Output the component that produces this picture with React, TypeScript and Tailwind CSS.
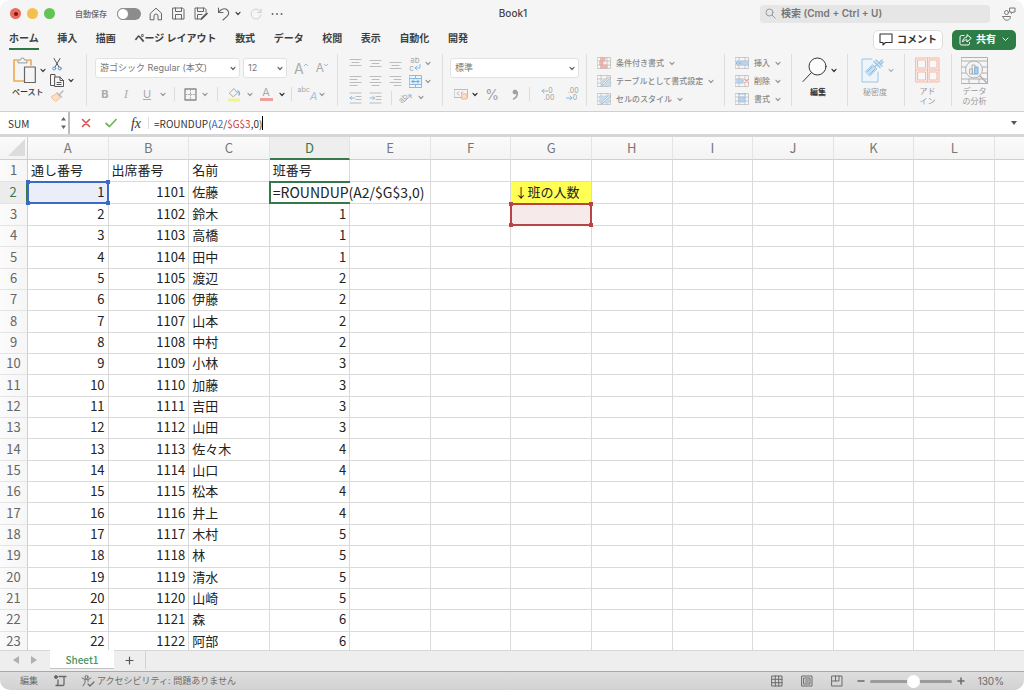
import type { ReactNode } from "react";
import clsx from "clsx";

const TABS = ["ホーム", "挿入", "描画", "ページ レイアウト", "数式", "データ", "校閲", "表示", "自動化", "開発"];
const COLUMNS = ["A", "B", "C", "D", "E", "F", "G", "H", "I", "J", "K", "L"];
const NAMES = [
  "佐藤", "鈴木", "高橋", "田中", "渡辺", "伊藤", "山本", "中村", "小林", "加藤", "吉田",
  "山田", "佐々木", "山口", "松本", "井上", "木村", "林", "清水", "山崎", "森", "阿部",
];

const ROWS: string[][] = [
  ["通し番号", "出席番号", "名前", "班番号"],
  ...NAMES.map((name, i) => [String(i + 1), String(1101 + i), name, i === 0 ? "" : String(Math.ceil((i + 1) / 4))]),
];

type IconProps = { w: number; h: number; className?: string; children: ReactNode };

function Icon({ w, h, className, children }: IconProps) {
  return (
    <svg width={w} height={h} viewBox={`0 0 ${w} ${h}`} fill="none" stroke="currentColor" strokeLinecap="round" strokeLinejoin="round" className={clsx("shrink-0", className)} aria-hidden="true">
      {children}
    </svg>
  );
}

function Chevron({ className = "text-[#9a9a9a]" }: { className?: string }) {
  return (
    <Icon w={6} h={5} className={className}>
      <path d="M1 1.3 3 3.5 5 1.3" strokeWidth="1.2" />
    </Icon>
  );
}

function Tool({ label, className, children }: { label: string; className?: string; children: ReactNode }) {
  return (
    <button type="button" aria-label={label} className={clsx("flex items-center justify-center shrink-0", className)}>
      {children}
    </button>
  );
}

function Divider() {
  return <span className="w-px h-[14px] bg-[#dcdcdc] shrink-0" />;
}

function Group({ className, children }: { className?: string; children: ReactNode }) {
  return <div className={clsx("h-[52px] border-r border-[#dedede] shrink-0", className)}>{children}</div>;
}

function Picker({ label, value, className }: { label: string; value: string; className: string }) {
  return (
    <div className={clsx("relative h-5", className)}>
      <select aria-label={label} className="block appearance-none w-full h-full rounded-[3px] border border-[#e2e2e2] bg-white pl-1 pr-4 text-[9px] text-[#777]">
        <option>{value}</option>
      </select>
      <Chevron className="absolute right-1 top-2 text-[#666]" />
    </div>
  );
}

function Lines({ rows }: { rows: [number, number, number][] }) {
  return (
    <Icon w={13} h={12} className="text-[#bcbcbc]">
      {rows.map(([y, a, b]) => <path key={y} d={`M${a} ${y}.5H${b}`} strokeWidth="1" />)}
    </Icon>
  );
}

function GridIcon({ kind }: { kind: string }) {
  return (
    <Icon w={14} h={12} className="text-[#a9a9a9] opacity-80">
      <path d="M.5.5h13v11H.5zM.5 4h13M.5 8h13M4 .5v11M10 .5v11" strokeWidth=".7" />
      {kind === "cond" && <path d="M4 1h4v3H4zM4 8h6v3H4zM3 4h3v4H3z" fill="#f0a7a0" stroke="#e58e86" strokeWidth=".6" />}
      {kind === "table" && <path d="M4 4h9v7H4z" fill="#bcd8ef" stroke="none" />}
      {kind === "style" && <path d="M3 3h9v7H3z" fill="#bcd8ef" stroke="#9fc4e4" strokeWidth=".6" />}
      {(kind === "table" || kind === "style") && <path d="m13 3-6 6-2 2 .5-2.5L12 2z" fill="#f7f7f7" stroke="#8ea3b5" strokeWidth=".7" />}
      {kind === "insert" && <><path d="M5 4h8.500v4H5z" fill="#a9cdec" stroke="#8dbbe2" strokeWidth=".6" /><path d="M6 6H1.200M3 4 1 6l2 2" stroke="#6aa7dc" strokeWidth="1" /></>}
      {kind === "delete" && <><path d="M9 3h4.500v6H9z" fill="#f5f5f5" stroke="none" /><path d="M2 4h5l2 2-2 2H2z" fill="#a9cdec" stroke="#8dbbe2" strokeWidth=".6" /><path d="m9.500 4 4 4m0-4-4 4" stroke="#ea8c85" strokeWidth="1.100" /></>}
      {kind === "format" && <><path d="M4 4h6v5H4z" fill="#a9cdec" stroke="#7fb2df" strokeWidth=".7" /><path d="M4 1h6M4 0v2M10 0v2" stroke="#7fb2df" strokeWidth=".9" /></>}
    </Icon>
  );
}

function MenuItem({ kind, label }: { kind: string; label: string }) {
  return (
    <button type="button" className="flex items-center gap-[5px] h-[18px] text-[8px] font-medium whitespace-nowrap text-[#888]">
      <GridIcon kind={kind} />
      <span>{label}</span>
      <Chevron />
    </button>
  );
}

function TitleBar() {
  return (
    <header className="grid grid-cols-[1fr_auto_1fr] items-center h-[27px] shrink-0 pl-[10px] pr-2 text-[#666]">
      <div className="flex items-center">
        <div className="flex gap-[6px]">
          <span className="flex items-center justify-center size-[11px] rounded-full bg-[#ec6a5e]"><span className="size-1 rounded-full bg-[#7d1712]" /></span>
          <span className="size-[11px] rounded-full bg-[#f4bf4f]" />
          <span className="size-[11px] rounded-full bg-[#61c554]" />
        </div>
        <label className="flex items-center gap-[10px] ml-5 text-[8px] font-medium whitespace-nowrap">
          自動保存
          <input type="checkbox" className="appearance-none w-6 h-3 rounded-full bg-[#8c8c8c] before:block before:size-3 before:rounded-full before:bg-white before:border before:border-[#8c8c8c]" />
        </label>
        <div className="flex items-center gap-[9px] ml-2">
          <Tool label="ホーム画面">
            <Icon w={14} h={14}><path d="M1.5 6.2 7 1.2l5.500 5v6.600H9V9a2 2 0 0 0-4 0v3.800H1.500z" /></Icon>
          </Tool>
          <Tool label="保存">
            <Icon w={13} h={13}><path d="M1 1h9.500L12 2.500V12H1zM3.500 1v3.500h6V1M3.500 12V7.500h6V12" /></Icon>
          </Tool>
          <Tool label="名前を付けて保存">
            <Icon w={14} h={13}><path d="M6 12H1V1h9.500L12 2.500V5M3.500 1v3.500h6V1M3.500 12V7.500H8" /><path d="m12.500 6-5 5-.8 1.500 1.600-.6 5-5z" fill="#555" stroke="#555" /></Icon>
          </Tool>
          <Tool label="元に戻す">
            <Icon w={13} h={14}><path d="M1.500 1v4.500H6M1.500 5.500C4 1.500 8 .8 10.300 3c2 2 1.800 4.300-.3 6.300L6 13" strokeWidth="1.100" /></Icon>
          </Tool>
          <Tool label="元に戻す一覧" className="-ml-1"><Chevron className="text-[#444]" /></Tool>
          <Tool label="やり直し">
            <Icon w={12} h={12} className="text-[#cfcfcf]"><path d="M11 1v3.500H7.500M10.800 4.400A5 5 0 1 0 11 7" /></Icon>
          </Tool>
          <Tool label="その他">
            <Icon w={12} h={4}><path d="M1.500 2h.1M6 2h.1M10.500 2h.1" strokeWidth="1.800" /></Icon>
          </Tool>
        </div>
      </div>
      <h1 className="text-[10px] font-medium text-[#444]">Book1</h1>
      <div className="flex items-center justify-end gap-3">
        <label className="flex items-center gap-[5px] w-[230px] h-[18px] rounded bg-[#e6e6e6] px-[5px]">
          <Icon w={11} h={11} className="text-[#999]"><circle cx="4.500" cy="4.500" r="3.500" /><path d="m7.200 7.200 3 3" /></Icon>
          <input aria-label="検索" placeholder="検索 (Cmd + Ctrl + U)" className="grow min-w-0 bg-transparent text-[10px] font-semibold outline-none placeholder:text-[#777]" />
        </label>
        <Tool label="共同作業">
          <Icon w={14} h={14} className="text-[#777]"><circle cx="4.500" cy="5.500" r="2" /><path d="M1 9.500h7.500c0 5-7.500 5-7.500 0zM8 1h5v4h-2L9.300 6.500V5H8z" /></Icon>
        </Tool>
      </div>
    </header>
  );
}

function RibbonTabs() {
  return (
    <nav className="flex items-center justify-between h-[25px] shrink-0 pl-[9px] pr-2">
      <div className="flex justify-between w-[459px] text-[10px] font-bold text-[#3f3f3f] whitespace-nowrap">
        {TABS.map((tab, i) => (
          <a key={tab} href="#ribbon" className={clsx("flex items-center h-[21px] border-b-2", i === 0 ? "border-[#2f7547]" : "border-transparent")}>{tab}</a>
        ))}
      </div>
      <div className="flex gap-[9px] text-[10px] font-bold whitespace-nowrap">
        <button type="button" className="flex items-center gap-1 h-5 px-[5px] rounded-[5px] border border-[#dedede] bg-white text-[#333]">
          <Icon w={14} h={13}><path d="M1 1h12v8.500H6.500L4 12V9.500H1z" strokeWidth="1.100" /></Icon>
          コメント
        </button>
        <button type="button" className="flex items-center gap-1 h-5 px-[7px] rounded-[5px] bg-[#2f7d46] text-white">
          <Icon w={13} h={12}><path d="M5 1.500H2.500A1.500 1.500 0 0 0 1 3v6.500A1.500 1.500 0 0 0 2.500 11H9a1.500 1.500 0 0 0 1.500-1.500V8.500" /><path d="M8 1v2C5.500 3.200 4 5 3.500 8 5 6.300 6 5.800 8 5.800V8l4-3.500z" /></Icon>
          共有
          <Icon w={7} h={5} className="ml-[2px]"><path d="m1 1 2.500 2.500L6 1" /></Icon>
        </button>
      </div>
    </nav>
  );
}

function Ribbon() {
  return (
    <section id="ribbon" className="flex items-start h-[60px] shrink-0 pt-[2px] border-b border-[#d0d0d0]">
      <Group className="flex w-[87px] pl-3 gap-1 text-[#555]">
        <button type="button" className="flex flex-col items-start text-[8px] leading-3 font-medium text-[#333]">
          <span className="flex items-center gap-1 h-8">
            <Icon w={24} h={28}>
              <path d="M5 4H2v21h10M16 4h3v5" stroke="#f0a850" strokeWidth="1.600" />
              <path d="M6 6.500V4h2.500a2 2 0 0 1 4 0H15v2.500z" fill="#f5f5f5" stroke="#999" />
              <path d="M12.500 11h10.800v15.500H12.500z" fill="#f5f5f5" stroke="#666" strokeWidth="1.200" />
            </Icon>
            <Chevron className="text-[#444]" />
          </span>
          ペースト
        </button>
        <div className="flex flex-col justify-between items-start py-1 h-[52px]">
          <Tool label="切り取り" className="ml-[2px]">
            <Icon w={10} h={13}><path d="M2 .5 7 9M8 .5 3 9" stroke="#555" /><circle cx="2.200" cy="10.500" r="1.500" stroke="#4c94d0" /><circle cx="7.800" cy="10.500" r="1.500" stroke="#4c94d0" /></Icon>
          </Tool>
          <Tool label="コピー" className="gap-1">
            <Icon w={14} h={13}><path d="M5 2.500V.5H.5v11H4M5 3h5l3.500 3.500v6H5zM10 3v3.500h3.500M7 8.500h4M7 10.500h4" /></Icon>
            <Chevron className="text-[#444]" />
          </Tool>
          <Tool label="書式のコピー">
            <Icon w={14} h={12}><path d="m13 1-4 4M7 3l4.500 4" stroke="#bbb" strokeWidth="1.600" /><path d="M6 4 1 7l4.500 4.500L10 8z" fill="#fbe0c4" stroke="#f2bf90" /></Icon>
          </Tool>
        </div>
      </Group>

      <Group className="flex flex-col justify-between w-[251px] pl-2 pr-1 pt-1 pb-[2px] text-[#aaa]">
        <div className="flex items-center gap-[3px] h-5">
          <Picker label="フォント" value="游ゴシック Regular (本文)" className="w-[145px]" />
          <Picker label="フォント サイズ" value="12" className="w-11" />
          <Tool label="フォントの拡大" className="ml-1 text-[14px]">A<Icon w={4} h={11}><path d="m0 3 2-2 2 2" stroke="#92bfe4" /></Icon></Tool>
          <Tool label="フォントの縮小" className="ml-[5px] text-[12px]">A<Icon w={4} h={11}><path d="m0 1 2 2 2-2" stroke="#92bfe4" /></Icon></Tool>
        </div>
        <div className="flex items-center h-5">
          <Tool label="太字" className="w-5 text-[11px] font-bold">B</Tool>
          <Tool label="斜体" className="w-[22px] text-[12px] italic font-['Liberation_Serif',serif]">I</Tool>
          <Tool label="下線" className="w-5 text-[11px] underline">U</Tool>
          <Tool label="下線の種類" className="w-3"><Chevron /></Tool>
          <span className="w-[5px]" /><Divider />
          <Tool label="罫線" className="w-[30px]"><Icon w={13} h={13}><path d="M1 1h11v11H1z" stroke="#888" strokeWidth="1.300" /><path d="M6.500 2v9M2 6.500h9" strokeDasharray="1 1.500" /></Icon></Tool>
          <Tool label="罫線の種類" className="-ml-[3px]"><Chevron /></Tool>
          <span className="w-[9px]" /><Divider />
          <Tool label="塗りつぶし" className="w-8"><Icon w={14} h={15}><path d="M2.500 6 7 1.500 10.500 6 6.500 9.500z" /><path d="M11 4c1.500 1 1.500 3 1 4" stroke="#7fb2df" strokeWidth="1.500" /><path d="M1 13h12" stroke="#f4f28f" strokeWidth="3" strokeLinecap="butt" /></Icon></Tool>
          <Tool label="塗りつぶしの色" className="-ml-[3px]"><Chevron /></Tool>
          <Tool label="フォントの色" className="w-[26px] flex-col text-[11px] leading-[10px]">A<span className="w-[13px] h-[3px] mt-px bg-[#efa09a]" /></Tool>
          <Tool label="文字色の一覧"><Chevron className="text-[#333]" /></Tool>
          <span className="w-[6px]" /><Divider />
          <Tool label="ふりがな" className="w-[27px] text-[7px] pl-1"><span className="-mt-2">abc</span><span className="mt-1 text-[11px] italic text-[#9cc5e8]">A</span></Tool>
          <Tool label="ふりがなの設定"><Chevron /></Tool>
        </div>
      </Group>

      <Group className="grid grid-cols-[20px_20px_20px_20px_auto] items-center w-[105px] pl-[7px] pr-2">
        <Tool label="上揃え"><Lines rows={[[1, 1, 12], [4, 3, 10], [7, 1, 12]]} /></Tool>
        <Tool label="上下中央揃え"><Lines rows={[[2, 1, 12], [5, 3, 10], [8, 1, 12]]} /></Tool>
        <Tool label="下揃え"><Lines rows={[[4, 1, 12], [7, 3, 10], [10, 1, 12]]} /></Tool>
        <Tool label="折り返し" className="flex-col text-[8px] leading-[8px] text-[#aaa]"><span>ab</span><span className="flex">c<Icon w={7} h={7}><path d="M6 0v4H1m2-2L1 4l2 2" stroke="#87b9e2" /></Icon></span></Tool>
        <Chevron />
        <Tool label="左揃え"><Lines rows={[[1, 1, 12], [4, 1, 8], [7, 1, 12], [10, 1, 8]]} /></Tool>
        <Tool label="中央揃え"><Lines rows={[[1, 1, 12], [4, 3, 10], [7, 1, 12], [10, 3, 10]]} /></Tool>
        <Tool label="右揃え"><Lines rows={[[1, 1, 12], [4, 5, 12], [7, 1, 12], [10, 5, 12]]} /></Tool>
        <Tool label="セルの結合"><Icon w={13} h={13} className="text-[#b0b0b0]"><path d="M.5.5h12v12H.5zM6.500.500v3M6.500 10v2.500" /><path d="M.5 3.500h12v6H.5z" fill="#e1effa" stroke="#87b9e2" /><path d="M3 6.500h7M4.500 5 3 6.500 4.500 8M8.500 5 10 6.500 8.500 8" stroke="#6aa7dc" /></Icon></Tool>
        <Chevron />
        <Tool label="インデントを減らす"><Icon w={13} h={12} className="text-[#bcbcbc]"><path d="M1 1h11M7 4.500h5M7 7.500h5M1 11h11" /><path d="M5.500 6H1m1.500-1.500L1 6l1.500 1.500" stroke="#87b9e2" /></Icon></Tool>
        <Tool label="インデントを増やす"><Icon w={13} h={12} className="text-[#bcbcbc]"><path d="M1 1h11M7 4.500h5M7 7.500h5M1 11h11" /><path d="M1 6h4.500M4 4.500 5.500 6 4 7.500" stroke="#87b9e2" /></Icon></Tool>
        <div className="col-span-3 flex items-center gap-[6px] pl-[6px]">
          <Divider />
          <Tool label="文字の向き" className="text-[8px] text-[#aaa]"><span className="-rotate-45">ab</span><Icon w={9} h={10} className="-ml-1"><path d="m1 9 7-7M5 2h3v3" stroke="#87b9e2" /></Icon></Tool>
          <Chevron />
        </div>
      </Group>

      <Group className="flex flex-col justify-between w-36 px-[7px] pt-1 pb-[2px] text-[#a0a0a0]">
        <Picker label="表示形式" value="標準" className="w-full" />
        <div className="flex items-center h-5">
          <Tool label="通貨" className="w-[22px]"><Icon w={14} h={12}><path d="M.5 1.500h13v8H.500zM5 4c-2-1-3 3 0 3M9 4c-2-1-3 3 0 3" stroke="#bbb" /><path d="M8 6h5v5H8z" fill="#fbdcc8" stroke="#f0b898" /></Icon></Tool>
          <Tool label="通貨の種類"><Chevron className="text-[#333]" /></Tool>
          <Tool label="パーセント" className="w-[28px] text-[14px]">%</Tool>
          <Tool label="桁区切り" className="w-[18px]"><Icon w={8} h={11}><circle cx="4" cy="3" r="2" fill="currentColor" /><path d="M6.300 3.500C6.500 7 5 9 2.500 10" strokeWidth="1.500" /></Icon></Tool>
          <span className="w-[5px]" /><Divider />
          <Tool label="小数点以下を増やす" className="flex-col w-[34px] text-[7px] leading-[7px]"><span className="flex items-center"><Icon w={7} h={6}><path d="M7 3H1m2-2L1 3l2 2" stroke="#87b9e2" /></Icon>0</span><span className="pl-1">.00</span></Tool>
          <Tool label="小数点以下を減らす" className="flex-col text-[7px] leading-[7px]"><span className="pl-1">.00</span><span className="flex items-center"><Icon w={7} h={6}><path d="M0 3h6M4 1l2 2-2 2" stroke="#87b9e2" /></Icon>0</span></Tool>
        </div>
      </Group>

      <Group className="w-[138px] pl-[10px]">
        <MenuItem kind="cond" label="条件付き書式" />
        <MenuItem kind="table" label="テーブルとして書式設定" />
        <MenuItem kind="style" label="セルのスタイル" />
      </Group>

      <Group className="w-[67px] pl-[10px]">
        <MenuItem kind="insert" label="挿入" />
        <MenuItem kind="delete" label="削除" />
        <MenuItem kind="format" label="書式" />
      </Group>

      <Group className="w-14 pl-[10px]">
        <button type="button" className="flex flex-col items-start text-[8px] leading-3 font-bold text-[#333]">
          <span className="flex items-center gap-1 h-8">
            <Icon w={25} h={26}><circle cx="15.500" cy="9.500" r="8.500" fill="#fcfcfc" /><path d="M9.500 15.500 1 24.500" /></Icon>
            <Chevron className="text-[#333]" />
          </span>
          <span className="pl-2">編集</span>
        </button>
      </Group>

      <Group className="w-[57px] pl-[13px] text-[#999]">
        <button type="button" className="flex flex-col items-start text-[8px] leading-3">
          <span className="flex items-center gap-1 h-8">
            <Icon w={23} h={26} className="text-[#9cc5e8]">
              <path d="M11 2H1v23h16V15" fill="#edf5fb" />
              <path d="m4.500 14.500 7-7 4.500 4.500-7 7z" fill="#c7dff3" strokeWidth=".8" />
              <path d="m6.500 14.500 5-5M9 17l5-5" stroke="#7fb2df" strokeDasharray="1.500 1" />
              <path d="m13 4.500 6 6M15 3l6 6M17.500 6.500 21 3M19.500 7.500l2.500-2.500M15.500 8l-2 2" strokeWidth="1.600" />
            </Icon>
            <Chevron className="text-[#b5b5b5]" />
          </span>
          <span className="pl-[2px]">秘密度</span>
        </button>
      </Group>

      <Group className="w-[47px] pl-[10px] text-[#999]">
        <button type="button" className="flex flex-col items-center text-[8px] leading-[10px]">
          <span className="flex items-center h-8">
            <Icon w={25} h={26} className="text-[#f1b9a8]"><path d="M1 1h23v24H1zM12.500 1v24M1 13h23" fill="#fdeee9" /><path d="M3 3h7.500v8H3zM14.500 3H22v8h-7.500zM3 15h7.500v8H3zM14.500 15H22v8h-7.500z" fill="#f8f8f8" /></Icon>
          </span>
          <span>アド<br />イン</span>
        </button>
      </Group>

      <button type="button" className="flex flex-col items-center pl-[9px] shrink-0 text-[8px] leading-[10px] text-[#999]">
        <span className="flex items-center h-8">
          <Icon w={27} h={27} className="text-[#b0b0b0]">
            <path d="M.5.5h26v26H.5zM.5 4h26M.5 10h26M.5 16h26M.5 22h26M8 22v4.500M18 22v4.500" />
            <circle cx="13" cy="12.500" r="8.500" fill="#f3f3f3" /><path d="m19 19 7 7" strokeWidth="1.600" />
            <path d="M9 12h2.500v5H9zM11.500 8H14v9h-2.500z" fill="#f3f3f3" /><path d="M14 10h3v7h-3z" fill="#a9cdec" stroke="#7fb2df" />
          </Icon>
        </span>
        <span>データ<br />の分析</span>
      </button>
    </section>
  );
}

function FormulaBar() {
  return (
    <div className="flex items-center h-[25px] shrink-0 bg-white border-b-[3px] border-[#d6d6d6] text-[10px] text-[#333]">
      <div className="flex items-center w-[70px] h-full pl-2 pr-[1px] border-r-2 border-[#bdbdbd]">
        <input aria-label="名前ボックス" defaultValue="SUM" className="w-full min-w-0 outline-none font-['Noto_Sans_CJK_JP',sans-serif]" />
        <Icon w={7} h={14} className="text-[#666]"><path d="M3.500 1 6 4.500H1zM3.500 13 6 9.500H1z" fill="currentColor" stroke="none" /></Icon>
      </div>
      <Tool label="キャンセル" className="w-8"><Icon w={10} h={10}><path d="m1.500 1.500 7 7m0-7-7 7" stroke="#d9534f" strokeWidth="1.600" /></Icon></Tool>
      <Tool label="入力" className="w-[18px]"><Icon w={12} h={10}><path d="m1 5.500 3.500 3L11 1.500" stroke="#72b55a" strokeWidth="1.700" /></Icon></Tool>
      <Tool label="関数の挿入" className="w-8 text-[14px] italic font-['Liberation_Serif',serif]">fx</Tool>
      <span className="w-px h-3 mr-[2px] -ml-[4px] bg-[#ddd]" />
      <div role="textbox" aria-label="数式" className="grow flex items-center pl-[3px] whitespace-nowrap font-['Noto_Sans_CJK_JP',sans-serif]">
        =ROUNDUP(<span className="text-[#3c68c8]">A2</span>/<span className="text-[#cc3a36]">$G$3</span>,0)
        <span className="w-px h-[14px] bg-black" />
      </div>
      <Tool label="数式バーの展開" className="w-5"><Icon w={6} h={5}><path d="M0 0h6L3 4z" fill="#555" stroke="none" /></Icon></Tool>
    </div>
  );
}

function Marquee({ frame, handle }: { frame: string; handle: string }) {
  return (
    <span className={clsx("absolute -inset-px border-2", frame)}>
      <span className={clsx("absolute -left-[3px] -top-[3px] size-1", handle)} />
      <span className={clsx("absolute -right-[3px] -top-[3px] size-1", handle)} />
      <span className={clsx("absolute -left-[3px] -bottom-[3px] size-1", handle)} />
      <span className={clsx("absolute -right-[3px] -bottom-[3px] size-1", handle)} />
    </span>
  );
}

function Cell({ row, col }: { row: number; col: number }) {
  const value = ROWS[row - 1][col] ?? "";
  const name = `${COLUMNS[col] ?? "M"}${row}`;
  const numeric = /^\d+$/.test(value);
  return (
    <td
      className={clsx(
        "relative px-[3px] pt-0 pb-[2px] border-b border-[#dadada] whitespace-nowrap",
        col < COLUMNS.length && "border-r",
        numeric && "text-right",
        (name === "A2" || name === "G3") && "z-10",
        name === "G2" && "bg-[#ffff54]",
      )}
    >
      {name === "A2" && <Marquee frame="border-[#3c68c8] bg-[#e9eef9]" handle="bg-[#3c68c8]" />}
      {name === "G3" && <Marquee frame="border-[#b94445] bg-[#f6eaea]" handle="bg-[#b94445]" />}
      {name === "D2" && (
        <>
          <span className="absolute -inset-px border-2 border-[#37784b]" />
          <span className="absolute left-px top-px bottom-px z-10 flex items-center pl-[2px] pr-[3px] pb-[2px] bg-white text-[14px]">=ROUNDUP(A2/$G$3,0)</span>
        </>
      )}
      {name === "G2" ? "↓班の人数" : <span className="relative">{value}</span>}
    </td>
  );
}

function Sheet() {
  return (
    <main className="grow min-h-0 overflow-hidden bg-white">
      <table className="w-full h-[calc(100%+3px)] table-fixed border-separate border-spacing-0 text-[13px] leading-[18px] text-[#222] font-['Noto_Sans_CJK_JP',sans-serif]">
        <colgroup>
          <col className="w-7" />
          {COLUMNS.map((c) => <col key={c} />)}
          <col className="w-[29px]" />
        </colgroup>
        <thead>
          <tr className="h-[23px] bg-linear-to-b from-[#fbfbfb] to-[#f3f3f3] text-[#777]">
            <td className="p-0 border-r border-b border-[#cfcfcf]">
              <Icon w={25} h={18}><path d="M25 0v17H8z" fill="#dcdcdc" stroke="none" /></Icon>
            </td>
            {COLUMNS.map((c) => (
              <th key={c} scope="col" className={clsx("p-0 font-normal border-r border-r-[#e4e4e4]", c === "D" ? "bg-[#eee] text-[#37784b] border-b-2 border-b-[#37784b]" : "border-b border-b-[#cfcfcf]")}>{c}</th>
            ))}
            <td className="p-0 border-b border-[#cfcfcf]" />
          </tr>
        </thead>
        <tbody>
          {ROWS.map((_, i) => (
            <tr key={i} className={i < 3 ? "h-[22px]" : undefined}>
              <th scope="row" className={clsx("px-0 pt-0 pb-[2px] font-normal border-b border-b-[#e4e4e4]", i === 1 ? "bg-[#ececec] text-[#37784b] border-r-2 border-r-[#37784b]" : "bg-linear-to-r from-[#fbfbfb] to-[#f6f6f6] text-[#666] border-r border-r-[#cfcfcf]")}>{i + 1}</th>
              {[...COLUMNS, "M"].map((c, col) => <Cell key={c} row={i + 1} col={col} />)}
            </tr>
          ))}
        </tbody>
      </table>
    </main>
  );
}

function SheetTabs() {
  return (
    <div className="flex items-start h-[21px] shrink-0 bg-[#eee] border-t border-[#d6d6d6]">
      <div className="flex items-center justify-center gap-3 w-[50px] h-[18px] text-[#b0b0b0]">
        <Tool label="前のシート"><Icon w={6} h={8}><path d="M6 0v8L0 4z" fill="currentColor" stroke="none" /></Icon></Tool>
        <Tool label="次のシート"><Icon w={6} h={8}><path d="M0 0v8l6-4z" fill="currentColor" stroke="none" /></Icon></Tool>
      </div>
      <button type="button" className="w-16 h-[19px] -mt-px bg-white border-b border-[#c4c4c4] text-[10px] font-medium text-[#4a9560] font-['Noto_Sans_CJK_JP',sans-serif]">Sheet1</button>
      <Tool label="シートの追加" className="w-8 h-[18px] border-r border-[#d2d2d2]"><Icon w={9} h={9}><path d="M4.500 1v7M1 4.500h7" stroke="#555" strokeWidth="1.200" /></Icon></Tool>
    </div>
  );
}

function StatusBar() {
  return (
    <footer className="flex items-center justify-between h-[19px] shrink-0 px-5 border-t border-[#a9a9a9] bg-linear-to-b from-[#dedede] to-[#d2d2d2] text-[9px] text-[#6a6a6a]">
      <div className="flex items-center whitespace-nowrap">
        <span>編集</span>
        <Tool label="マクロの記録" className="ml-4"><Icon w={13} h={12}><circle cx="2" cy="2" r="1.500" fill="currentColor" /><path d="M5 1.500h7M10 1.500v7.500c0 2-2 1.500-2 1.500H2c2 0 2-1 2-2V5" strokeWidth="1.300" /></Icon></Tool>
        <a href="#accessibility" className="flex items-center gap-[2px] ml-[14px]">
          <Icon w={14} h={12}><circle cx="5.500" cy="2" r="1.500" /><path d="M1 3c3 2 6 2 9 0M4 4.500v3L2 11M7 4.500v2" /><path d="m7 9 2 2 4-4" strokeWidth="1.200" /></Icon>
          アクセシビリティ: 問題ありません
        </a>
      </div>
      <div className="flex items-center">
        <div className="flex gap-[18px]">
          <Tool label="標準表示"><Icon w={12} h={12}><path d="M1 1h10v10H1zM1 4.300h10M1 7.700h10M4.300 1v10M7.700 1v10" /></Icon></Tool>
          <Tool label="ページ レイアウト表示"><Icon w={12} h={12}><path d="M1 1h10v10H1zM3 3h6v6H3zM4.500 5h3M4.500 7h3" /></Icon></Tool>
          <Tool label="改ページ プレビュー"><Icon w={12} h={12}><path d="M1 1h10v10H1zM4.500 1v5M8 1v5H1" /></Icon></Tool>
        </div>
        <Tool label="縮小" className="ml-[14px]"><Icon w={8} h={8}><path d="M1 4h6" strokeWidth="1.500" /></Icon></Tool>
        <input
          type="range"
          aria-label="ズーム"
          min={0}
          max={100}
          defaultValue={54}
          className="appearance-none w-[82px] h-[13px] mx-[5px] bg-transparent [&::-webkit-slider-runnable-track]:h-[3px] [&::-webkit-slider-runnable-track]:rounded-full [&::-webkit-slider-runnable-track]:bg-[#9b9b9b] [&::-webkit-slider-thumb]:appearance-none [&::-webkit-slider-thumb]:size-[13px] [&::-webkit-slider-thumb]:-mt-[5px] [&::-webkit-slider-thumb]:rounded-full [&::-webkit-slider-thumb]:bg-white"
        />
        <Tool label="拡大"><Icon w={8} h={8}><path d="M1 4h6M4 1v6" strokeWidth="1.500" /></Icon></Tool>
        <span className="ml-[13px] text-[10px]">130%</span>
      </div>
    </footer>
  );
}

export default function App() {
  return (
    <div className="flex flex-col h-screen overflow-hidden rounded-[10px] bg-[#f5f5f5] font-['Inter','Noto_Sans_CJK_JP',sans-serif]">
      <TitleBar />
      <RibbonTabs />
      <Ribbon />
      <FormulaBar />
      <Sheet />
      <SheetTabs />
      <StatusBar />
    </div>
  );
}
